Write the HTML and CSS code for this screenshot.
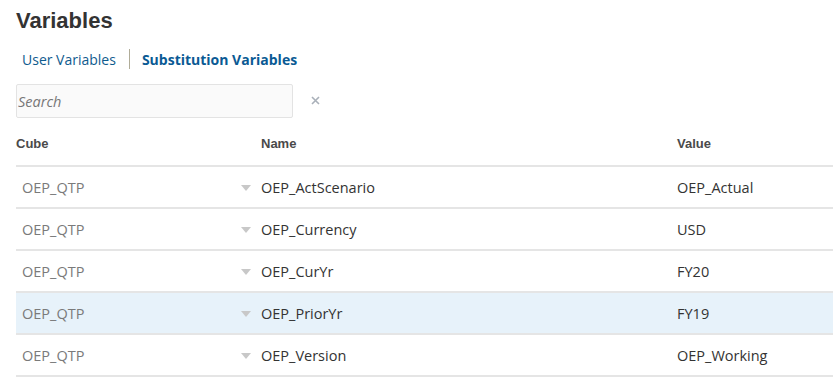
FILE: index.html
```html
<!DOCTYPE html>
<html lang="en">
<head>
    <meta charset="UTF-8">
    <title>Variables</title>
    <link rel="stylesheet" href="styles.css">
</head>
<body>
    <h1 class="title">Variables</h1>
    <div class="tabs">
        <a class="tab">User Variables</a>
        <span class="tab-sep"></span>
        <a class="tab active">Substitution Variables</a>
    </div>
    <div class="search-row">
        <input class="search" type="text" placeholder="Search">
        <svg class="clear" width="9" height="9" viewBox="0 0 9 9">
            <path d="M1 1L8 8M8 1L1 8" stroke="#a9b0b9" stroke-width="1.6" fill="none"/>
        </svg>
    </div>
    <table class="grid">
        <thead>
            <tr>
                <th class="col-cube">Cube</th>
                <th class="col-name">Name</th>
                <th class="col-value">Value</th>
            </tr>
        </thead>
        <tbody>
            <tr>
                <td class="cube">OEP_QTP</td>
                <td class="name"><span class="caret"></span>OEP_ActScenario</td>
                <td class="value">OEP_Actual</td>
            </tr>
            <tr>
                <td class="cube">OEP_QTP</td>
                <td class="name"><span class="caret"></span>OEP_Currency</td>
                <td class="value">USD</td>
            </tr>
            <tr>
                <td class="cube">OEP_QTP</td>
                <td class="name"><span class="caret"></span>OEP_CurYr</td>
                <td class="value">FY20</td>
            </tr>
            <tr class="selected">
                <td class="cube">OEP_QTP</td>
                <td class="name"><span class="caret"></span>OEP_PriorYr</td>
                <td class="value">FY19</td>
            </tr>
            <tr>
                <td class="cube">OEP_QTP</td>
                <td class="name"><span class="caret"></span>OEP_Version</td>
                <td class="value">OEP_Working</td>
            </tr>
        </tbody>
    </table>
</body>
</html>
```
FILE: styles.css
```css
* {
    margin: 0;
    padding: 0;
    box-sizing: border-box;
}

body {
    font-family: 'Open Sans', sans-serif;
    color: #333;
    background: #fff;
    padding: 8px 0 0 16px;
    overflow: hidden;
}

.title {
    font-family: 'Liberation Sans', Arial, sans-serif;
    font-size: 22px;
    font-weight: bold;
    color: #333;
    line-height: 25px;
}

.tabs {
    display: flex;
    align-items: center;
    margin-top: 15px;
    padding-left: 6px;
    height: 22px;
}

.tab {
    font-size: 14px;
    color: #0f5b8e;
}

.tab.active {
    font-weight: bold;
    color: #0a5a94;
}

.tab-sep {
    width: 1px;
    height: 20px;
    background: #b0ac98;
    margin: 0 12px 0 13px;
}

.search-row {
    display: flex;
    align-items: center;
    margin-top: 14px;
}

.search {
    width: 277px;
    height: 34px;
    border: 1px solid #e3e3e3;
    border-radius: 2px;
    background: #fafafa;
    padding-left: 1px;
    font-family: 'Open Sans', sans-serif;
    font-size: 14.5px;
    outline: none;
}

.search::placeholder {
    font-style: italic;
    color: #777;
}

.clear {
    margin-left: 18px;
    margin-top: -2px;
}

.grid {
    width: calc(100% + 16px);
    border-collapse: collapse;
    margin-top: 10px;
}

.grid th {
    font-family: 'Liberation Sans', Arial, sans-serif;
    font-size: 13px;
    font-weight: bold;
    color: #4a4a4a;
    text-align: left;
    height: 38px;
    padding-bottom: 6px;
    border-bottom: 2px solid #e5e5e5;
    vertical-align: middle;
}

.col-cube {
    width: 245px;
}

.col-name {
    width: 416px;
}

.grid td {
    height: 42px;
    font-size: 14.5px;
    border-bottom: 2px solid #e5e5e5;
    vertical-align: middle;
}

.cube {
    color: #7a7a7a;
    padding-left: 6px;
}

.name {
    color: #333;
    position: relative;
}

.caret {
    position: absolute;
    left: -20px;
    top: 18px;
    width: 0;
    height: 0;
    border-left: 5px solid transparent;
    border-right: 5px solid transparent;
    border-top: 6px solid #c8c8c8;
}

.value {
    color: #333;
}

.selected td {
    background: #e7f2fa;
}
```
